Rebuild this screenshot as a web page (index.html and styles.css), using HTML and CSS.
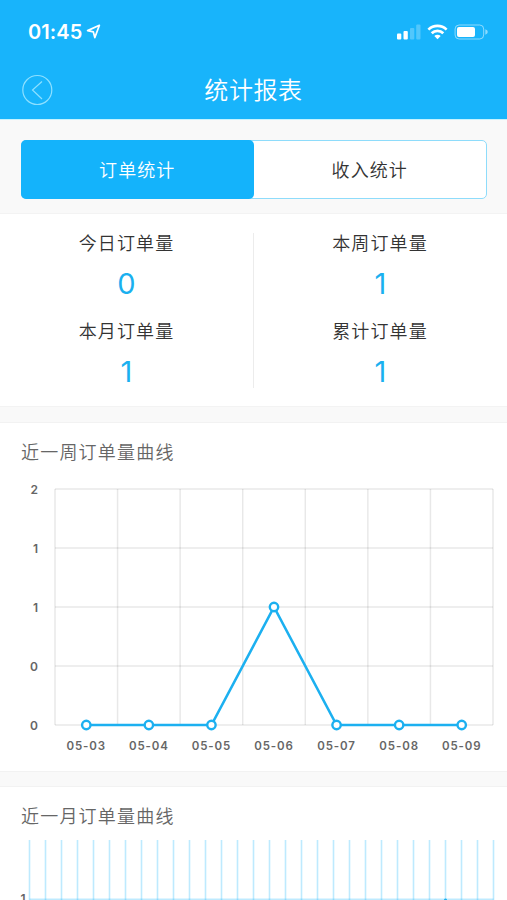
FILE: index.html
```html
<!DOCTYPE html>
<html lang="zh-CN">
<head>
  <meta charset="UTF-8">
  <meta name="viewport" content="width=device-width, initial-scale=1.0">
  <title>统计报表</title>
  <link rel="stylesheet" href="styles.css">
</head>
<body>
  <header class="header">
    <div class="status-bar">
      <div class="status-time">
        <span>01:45</span>
        <svg class="location" width="15" height="16" viewBox="0 0 15 16">
          <path d="M13.4 1.3 L1.6 6.6 L7.3 7.8 L8.8 13.6 Z" />
        </svg>
      </div>
      <svg class="status-icons" width="92" height="18" viewBox="0 0 92 18">
        <rect x="0" y="10.5" width="4.3" height="6" rx="1" fill="#fff" />
        <rect x="6.5" y="8" width="4.3" height="8.5" rx="1" fill="#fff" />
        <rect x="13" y="5" width="4.3" height="11.5" rx="1" fill="#fff" opacity="0.25" />
        <rect x="19.2" y="1.5" width="4.3" height="15" rx="1" fill="#fff" opacity="0.25" />
        <path class="wifi" d="M31.4 6.6 A13 13 0 0 1 49.6 6.6" />
        <path class="wifi" d="M34.7 10.2 A8.2 8.2 0 0 1 46.3 10.2" />
        <path d="M37.3 13.1 A4.6 4.6 0 0 1 43.7 13.1 L40.5 16.3 Z" fill="#fff" />
        <rect x="58.1" y="2" width="28.6" height="14" rx="4" fill="none" stroke="#fff" opacity="0.5" />
        <rect x="60" y="4" width="18" height="10" rx="2" fill="#fff" />
        <path d="M88.3 6.3 Q90.8 7.1 90.8 9 Q90.8 10.9 88.3 11.7 Z" fill="#fff" opacity="0.5" />
      </svg>
    </div>
    <div class="nav">
      <button class="back" aria-label="返回">
        <svg width="32" height="32" viewBox="0 0 32 32">
          <circle cx="16.3" cy="16" r="14.5" />
          <path d="M21 7.5 L11.5 16 L21 25" />
        </svg>
      </button>
      <h1>统计报表</h1>
    </div>
  </header>

  <div class="tabs">
    <button class="tab active">订单统计</button>
    <button class="tab">收入统计</button>
  </div>

  <section class="summary">
    <div class="summary-col">
      <div class="label">今日订单量</div>
      <div class="value">0</div>
      <div class="label">本月订单量</div>
      <div class="value">1</div>
    </div>
    <div class="summary-col">
      <div class="label">本周订单量</div>
      <div class="value">1</div>
      <div class="label">累计订单量</div>
      <div class="value">1</div>
    </div>
  </section>

  <section class="card week">
    <h2>近一周订单量曲线</h2>
    <svg class="chart" id="weekChart" width="507" height="290" viewBox="0 0 507 290"></svg>
  </section>

  <section class="card month">
    <h2>近一月订单量曲线</h2>
    <svg class="chart" id="monthChart" width="507" height="60" viewBox="0 0 507 60"></svg>
  </section>

  <script src="chart.js"></script>
</body>
</html>
```
FILE: styles.css
```css
* {
  box-sizing: border-box;
}
body {
  margin: 0;
  height: 900px;
  overflow: hidden;
  background: #f9f9f9;
  color: #444;
  font-family: Inter, "Noto Sans CJK SC", sans-serif;
}
h1, h2 {
  margin: 0;
  font-weight: 350;
}
button {
  padding: 0;
  border: none;
  background: none;
  font-family: inherit;
}
.header {
  height: 120px;
  background: #18b4fb;
  color: #fff;
  border-bottom: 1px solid #c5f3ff;
}
.status-bar {
  display: flex;
  justify-content: space-between;
  height: 60px;
  padding: 22px 18px 0 28px;
}
.status-time {
  display: flex;
  gap: 4px;
  font-size: 20px;
  line-height: 20px;
  font-weight: 600;
  letter-spacing: 0.1px;
}
.location {
  margin-top: 2px;
  fill: none;
  stroke: #fff;
  stroke-width: 1.7;
  stroke-linejoin: round;
}
.status-icons {
  margin-top: 1px;
}
.wifi {
  fill: none;
  stroke: #fff;
  stroke-width: 2.7;
}
.nav {
  display: grid;
  grid-template-columns: 32px 1fr 32px;
  align-items: center;
  height: 60px;
  padding: 0 21px;
}
.back {
  height: 32px;
}
.back svg {
  display: block;
  fill: none;
  stroke: #8ee0ff;
  stroke-width: 1.2;
}
.nav h1 {
  padding-top: 2px;
  text-align: center;
  font-size: 24px;
  line-height: 36px;
  letter-spacing: 0.6px;
}
.tabs {
  display: flex;
  height: 59px;
  margin: 20px 20px 14px 21px;
  border: 1px solid #8edcfb;
  border-radius: 5px;
  background: #fff;
}
.tab {
  flex: 1;
  padding-bottom: 1px;
  font-size: 18px;
  font-weight: 350;
  letter-spacing: 1.1px;
  color: #333;
}
.tab.active {
  margin: -1px 0 -1px -1px;
  border-radius: 5px;
  background: #14b3fb;
  color: #fff;
}
.summary {
  display: flex;
  height: 194px;
  padding: 19px 0 18px;
  background: #fff;
  border-top: 1px solid #f3f3f3;
  border-bottom: 1px solid #f3f3f3;
}
.summary-col {
  flex: 1;
  text-align: center;
}
.summary-col:first-child {
  border-right: 1px solid #ececec;
}
.label {
  height: 22px;
  font-size: 18px;
  font-weight: 350;
  line-height: 22px;
  letter-spacing: 1.1px;
  color: #333;
}
.summary-col:last-child .label {
  padding-right: 1px;
}
.value {
  height: 66px;
  padding-top: 12px;
  font-size: 29px;
  font-weight: 400;
  line-height: 34px;
  color: #1ab0ef;
}
.card {
  background: #fff;
  border-top: 1px solid #f2f2f2;
  border-bottom: 1px solid #f2f2f2;
}
.card h2 {
  height: 58px;
  padding: 16px 21px 0;
  font-size: 18px;
  line-height: 28px;
  letter-spacing: 1.2px;
  color: #666;
}
.week {
  height: 350px;
  margin-top: 15px;
}
.month {
  height: 114px;
  margin-top: 14px;
  border-bottom: none;
}
.month h2 {
  height: 53px;
}
.chart {
  display: block;
}
.chart text {
  font-family: Inter, sans-serif;
  font-size: 12px;
  font-weight: 600;
  fill: #666;
}
.chart .x-label {
  text-anchor: middle;
  font-size: 11.5px;
  letter-spacing: 0.9px;
}
.chart .y-label {
  text-anchor: end;
}
.grid-line {
  stroke: #000;
  stroke-opacity: 0.09;
  stroke-width: 1.5;
}
.month-line {
  stroke: #14b3fb;
  stroke-opacity: 0.28;
  stroke-width: 1.6;
}
.line {
  fill: none;
  stroke: #1cb0f0;
  stroke-width: 2.6;
}
.dot {
  fill: #fff;
  stroke: #1cb0f0;
  stroke-width: 2.4;
}
```
FILE: chart.js
```js
const NS = "http://www.w3.org/2000/svg";

function add(parent, tag, attrs, text) {
  const el = document.createElementNS(NS, tag);
  for (const key in attrs) {
    el.setAttribute(key, attrs[key]);
  }
  if (text !== undefined) el.textContent = text;
  parent.appendChild(el);
}

function addLine(parent, x1, y1, x2, y2, cls) {
  add(parent, "line", { x1, y1, x2, y2, class: cls });
}

// Last 7 days
const week = document.getElementById("weekChart");
const days = ["05-03", "05-04", "05-05", "05-06", "05-07", "05-08", "05-09"];
const orders = [0, 0, 0, 1, 0, 0, 0];
const yLabels = ["2", "1", "1", "0", "0"];
const left = 55, right = 493, top0 = 8, rowH = 59;
const bottom = top0 + rowH * 4;
const colW = (right - left) / days.length;

yLabels.forEach((label, i) => {
  const y = top0 + i * rowH;
  addLine(week, left, y, right, y, "grid-line");
  add(week, "text", { x: 38, y: y + 4.6, class: "y-label" }, label);
});
for (let i = 0; i <= days.length; i++) {
  addLine(week, left + i * colW, top0, left + i * colW, bottom, "grid-line");
}

const points = orders.map((n, i) => [left + (i + 0.5) * colW, bottom - n * rowH * 2]);
add(week, "polyline", { points: points.join(" "), class: "line" });
points.forEach(([cx, cy], i) => {
  add(week, "circle", { cx, cy, r: 4.2, class: "dot" });
  add(week, "text", { x: cx, y: bottom + 25, class: "x-label" }, days[i]);
});

// Last 30 days
const month = document.getElementById("monthChart");
for (let i = 0; i < 30; i++) {
  const x = 29.5 + i * 16;
  addLine(month, x, 0, x, 60, "month-line");
}
addLine(month, 29.5, 59.3, 493.5, 59.3, "month-line");
add(month, "text", { x: 25.5, y: 63, class: "y-label" }, "1");
add(month, "circle", { cx: 445.5, cy: 60, r: 1.6, fill: "#1cb0f0" });
```
